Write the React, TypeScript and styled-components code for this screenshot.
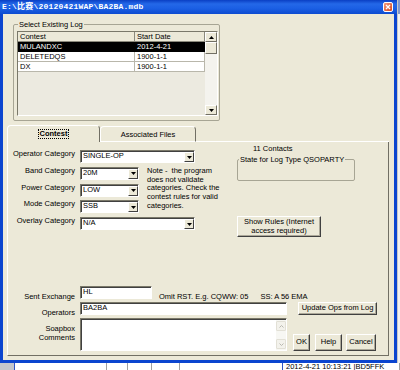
import React from "react";
import styled, { createGlobalStyle, css } from "styled-components";

const FACE = "#ece9d8";
const EDGE = "#a7a594";
const DARK = "#716f64";

const GlobalStyle = createGlobalStyle`
  html, body { margin: 0; padding: 0; background: #ffffff; }
  body { font-family: "Liberation Sans", Arial, sans-serif; font-size: 7.5px; color: #000; }
  #root { width: 400px; height: 370px; overflow: hidden; }
  * { box-sizing: border-box; }
`;

const Desktop = styled.div`
  width: 400px;
  height: 370px;
  overflow: hidden;
  display: grid;
  grid-template-columns: 397px 3px;
  grid-template-rows: 363px 7px;
`;

const Dialog = styled.div`
  display: flex;
  flex-direction: column;
  min-height: 0;
`;

const TitleBar = styled.div`
  height: 14px;
  flex: none;
  display: flex;
  align-items: center;
  justify-content: space-between;
  padding: 0 4px 0 2px;
  background: linear-gradient(180deg, #0a3fc4 0%, #2468e8 28%, #1b5fe4 60%, #0d4bd0 100%);
`;

const TitleText = styled.span`
  color: #fff;
  font-family: "Liberation Mono", "Noto Sans CJK SC", monospace;
  font-weight: 700;
  font-size: 8px;
  letter-spacing: 0.2px;
  line-height: 10px;
  white-space: pre;
`;

const CloseButton = styled.div`
  width: 10px;
  height: 10px;
  border: 1px solid #fff;
  border-radius: 2px;
  background: linear-gradient(135deg, #f39a7c, #d6471f);
  display: grid;
  place-items: center;
`;

const Body = styled.div`
  flex: 1;
  min-height: 0;
  background: ${FACE};
  border: 3px solid #0b45cf;
  border-top: none;
  display: flex;
  flex-direction: column;
  padding: 6px 5px 4px 4px;
`;

const GroupBox = styled.fieldset<{ $w: number; $ml?: number; $mt?: number }>`
  margin: ${(p) => p.$mt ?? 0}px 0 0 ${(p) => p.$ml ?? 0}px;
  width: ${(p) => p.$w}px;
  min-width: 0;
  border: 1px solid ${EDGE};
  border-radius: 2px;
  flex: none;
`;

const LogGroup = styled(GroupBox)`
  padding: 2px 1px 4px 3px;
`;

const StateGroup = styled(GroupBox)`
  padding: 0;
`;

const Legend = styled.legend`
  padding: 0 1px;
  margin-left: 1px;
  line-height: 9px;
  font-size: 7.5px;
`;

const StateBody = styled.div`
  height: 16px;
`;

const LogList = styled.div`
  height: 85px;
  display: flex;
  border: 1px solid;
  border-color: #7a7869 #ffffff #ffffff #7a7869;
  background: #eceae0;
`;

const GridArea = styled.div`
  flex: 1;
  display: grid;
  grid-template-columns: 117px 70px;
  grid-auto-rows: 10px;
  align-content: start;
`;

const Cell = styled.div<{ $head?: boolean; $sel?: boolean }>`
  padding-left: 2px;
  line-height: 9px;
  white-space: nowrap;
  overflow: hidden;
  border-right: 1px solid;
  border-bottom: 1px solid;
  ${(p) =>
    p.$head
      ? css`
          background: ${FACE};
          border-color: #8b897c;
        `
      : p.$sel
      ? css`
          background: #000;
          color: #fff;
          border-color: #000;
        `
      : css`
          background: #fff;
          border-color: #b9b7ab;
        `}
`;

const VScroll = styled.div`
  width: 12px;
  flex: none;
  display: flex;
  flex-direction: column;
  background: #f4f3ee;
`;

const ScrollBtn = styled.div<{ $h: number }>`
  height: ${(p) => p.$h}px;
  flex: none;
  background: ${FACE};
  border: 1px solid;
  border-color: #ffffff ${DARK} ${DARK} #ffffff;
  display: grid;
  place-items: center;
`;

const ScrollTrack = styled.div`
  flex: 1;
`;

const TabStrip = styled.div`
  display: flex;
  align-items: flex-end;
  height: 17px;
  margin-top: 4px;
  flex: none;
`;

const Tab = styled.div<{ $active?: boolean; $w: number }>`
  width: ${(p) => p.$w}px;
  height: ${(p) => (p.$active ? 17 : 16)}px;
  background: ${FACE};
  border: 1px solid;
  border-color: #ffffff ${DARK} #ffffff #ffffff;
  border-bottom-width: ${(p) => (p.$active ? 0 : 1)}px;
  border-radius: 4px 4px 0 0;
  display: flex;
  align-items: center;
  justify-content: center;
  padding-bottom: ${(p) => (p.$active ? 1 : 0)}px;
  font-weight: ${(p) => (p.$active ? 700 : 400)};
`;

const FocusLabel = styled.span`
  border: 1px dotted #000;
  padding: 0 1px;
  line-height: 8px;
`;

const TabFill = styled.div`
  flex: 1;
  height: 1px;
  background: #fff;
`;

const Panel = styled.div`
  flex: 1;
  min-height: 0;
  border: 1px solid;
  border-top: none;
  border-color: #ffffff ${DARK} ${DARK} #ffffff;
  display: flex;
  flex-direction: column;
  padding: 0 0 4px 0;
`;

const TopSection = styled.div`
  display: flex;
  align-items: flex-start;
`;

const CategoryForm = styled.div`
  margin-top: 8px;
  display: grid;
  grid-template-columns: 67px 59px 85px;
  column-gap: 5px;
  grid-template-rows: repeat(5, 13px);
  row-gap: 3.75px;
`;

const Label = styled.div<{ $pt?: number; $row?: number }>`
  grid-column: 1;
  ${(p) => (p.$row ? `grid-row: ${p.$row};` : "")}
  text-align: right;
  white-space: nowrap;
  line-height: ${(p) => (p.$pt !== undefined ? 9 : 7)}px;
  padding-top: ${(p) => p.$pt ?? 0}px;
`;

const ComboBox = styled.div<{ $w: number; $span?: boolean; $row: number }>`
  width: ${(p) => p.$w}px;
  height: 13px;
  grid-column: ${(p) => (p.$span ? "2 / 4" : "2")};
  grid-row: ${(p) => p.$row};
  border: 1px solid;
  border-color: #7a7869 #ffffff #ffffff #7a7869;
  box-shadow: inset 1px 1px 0 #404040;
  background: #fff;
  display: flex;
  align-items: stretch;
`;

const FieldText = styled.span`
  flex: 1;
  padding-left: 2px;
  line-height: 10px;
  white-space: nowrap;
`;

const ComboArrow = styled.div`
  width: 10px;
  margin: 1px 0 0 0;
  background: ${FACE};
  border: 1px solid;
  border-color: #ffffff #404040 #404040 #ffffff;
  display: grid;
  place-items: center;
`;

const Note = styled.div`
  grid-column: 3;
  grid-row: 2 / 5;
  padding-left: 3px;
  line-height: 8.75px;
  white-space: pre;
`;

const RightCol = styled.div`
  margin-left: 8px;
  margin-top: 2px;
  width: 118px;
  display: flex;
  flex-direction: column;
  align-items: flex-start;
`;

const Contacts = styled.div`
  margin-left: 16px;
  line-height: 9px;
`;

const Button = styled.button<{ $w: number; $h: number; $ml?: number; $mt?: number }>`
  width: ${(p) => p.$w}px;
  height: ${(p) => p.$h}px;
  margin: ${(p) => p.$mt ?? 0}px 0 0 ${(p) => p.$ml ?? 0}px;
  padding: 0;
  flex: none;
  font-family: "Liberation Sans", Arial, sans-serif;
  font-size: 7.5px;
  line-height: 8.7px;
  color: #000;
  background: ${FACE};
  border: 1px solid;
  border-color: #ffffff #404040 #404040 #ffffff;
  box-shadow: inset -1px -1px 0 #aca899;
  text-align: center;
`;

const BottomGrid = styled.div`
  margin-top: auto;
  display: grid;
  grid-template-columns: 67px 207px 1fr;
  column-gap: 5px;
  grid-template-rows: 13px 13px 33px;
  row-gap: 3px;
`;

const FieldRow = styled.div`
  display: flex;
  align-items: flex-start;
`;

const TextField = styled.div<{ $w: number }>`
  width: ${(p) => p.$w}px;
  height: 13px;
  flex: none;
  border: 1px solid;
  border-color: #7a7869 #ffffff #ffffff #7a7869;
  box-shadow: inset 1px 1px 0 #404040;
  background: #fff;
  display: flex;
`;

const Hint = styled.div`
  margin-left: 7px;
  padding-top: 6px;
  line-height: 9px;
  display: flex;
  gap: 12px;
  white-space: nowrap;
`;

const MemoBox = styled.div`
  height: 33px;
  border: 1px solid;
  border-color: #7a7869 #ffffff #ffffff #7a7869;
  box-shadow: inset 1px 1px 0 #404040;
  background: #fff;
  display: flex;
  justify-content: flex-end;
  padding: 1px 0 0 1px;
`;

const MemoScroll = styled.div`
  width: 10px;
  display: flex;
  flex-direction: column;
  justify-content: space-between;
  background: #f7f7f3;
  padding: 1px 0;
`;

const MemoBtn = styled.div`
  height: 10px;
  background: #f3f2ec;
  border: 1px solid #e2e0d6;
  border-radius: 1px;
  display: grid;
  place-items: center;
`;

const ButtonRow = styled.div`
  display: flex;
  align-items: flex-end;
  padding-left: 1px;
`;

const RightStrip = styled.div`
  background: linear-gradient(180deg, #8198cc 0 14px, #f2f2f0 14px);
  border-left: 1px solid #c8c8c8;
`;

const BottomStrip = styled.div`
  grid-column: 1 / 3;
  display: flex;
  background: #fff;
  overflow: hidden;
`;

const BgCell = styled.div<{ $w?: number; $bg?: string; $line?: string }>`
  ${(p) => (p.$w ? `width: ${p.$w}px; flex: none;` : "flex: 1;")}
  background: ${(p) => p.$bg ?? "#ffffff"};
  border-right: 1px solid ${(p) => p.$line ?? "#a0a0a0"};
  padding-left: 3px;
  line-height: 9px;
  margin-top: -1px;
  white-space: nowrap;
`;

const Tri = ({ up, color = "#000" }: { up?: boolean; color?: string }) => (
  <svg width="5" height="3" viewBox="0 0 5 3">
    <path d={up ? "M0 3h5L2.5 0z" : "M0 0h5L2.5 3z"} fill={color} />
  </svg>
);

const Chevron = ({ up }: { up?: boolean }) => (
  <svg width="5" height="3" viewBox="0 0 5 3">
    <path d={up ? "M0.5 2.5L2.5 0.5L4.5 2.5" : "M0.5 0.5L2.5 2.5L4.5 0.5"} fill="none" stroke="#b9b8b0" strokeWidth="1" />
  </svg>
);

const Combo = ({ value, w, span, row }: { value: string; w: number; span?: boolean; row: number }) => (
  <ComboBox $w={w} $span={span} $row={row}>
    <FieldText>{value}</FieldText>
    <ComboArrow>
      <Tri />
    </ComboArrow>
  </ComboBox>
);

const logs = [
  { contest: "MULANDXC", date: "2012-4-21", sel: true },
  { contest: "DELETEDQS", date: "1900-1-1" },
  { contest: "DX", date: "1900-1-1" },
];

export default function App() {
  return (
    <>
      <GlobalStyle />
      <Desktop>
        <Dialog>
          <TitleBar>
            <TitleText>E:\比赛\20120421WAP\BA2BA.mdb</TitleText>
            <CloseButton>
              <svg width="6" height="6" viewBox="0 0 6 6">
                <path d="M1 1L5 5M5 1L1 5" stroke="#fff" strokeWidth="1.3" />
              </svg>
            </CloseButton>
          </TitleBar>
          <Body>
            <LogGroup $w={207} $ml={6}>
              <Legend>Select Existing Log</Legend>
              <LogList>
                <GridArea>
                  <Cell $head>Contest</Cell>
                  <Cell $head>Start Date</Cell>
                  {logs.map((l) => (
                    <React.Fragment key={l.contest}>
                      <Cell $sel={l.sel}>{l.contest}</Cell>
                      <Cell $sel={l.sel}>{l.date}</Cell>
                    </React.Fragment>
                  ))}
                </GridArea>
                <VScroll>
                  <ScrollBtn $h={10}>
                    <Tri up />
                  </ScrollBtn>
                  <ScrollBtn $h={12} />
                  <ScrollTrack />
                  <ScrollBtn $h={10}>
                    <Tri />
                  </ScrollBtn>
                </VScroll>
              </LogList>
            </LogGroup>

            <TabStrip>
              <Tab $active $w={93}>
                <FocusLabel>Contest</FocusLabel>
              </Tab>
              <Tab $w={96}>Associated Files</Tab>
              <TabFill />
            </TabStrip>

            <Panel>
              <TopSection>
                <CategoryForm>
                  <Label $row={1}>Operator Category</Label>
                  <Combo value="SINGLE-OP" w={115} span row={1} />
                  <Label $row={2}>Band Category</Label>
                  <Combo value="20M" w={59} row={2} />
                  <Note>
                    {"Note -  the program"}
                    <br />
                    {"does not validate"}
                    <br />
                    {"categories. Check the"}
                    <br />
                    {"contest rules for valid"}
                    <br />
                    {"categories."}
                  </Note>
                  <Label $row={3}>Power Category</Label>
                  <Combo value="LOW" w={59} row={3} />
                  <Label $row={4}>Mode Category</Label>
                  <Combo value="SSB" w={59} row={4} />
                  <Label $row={5}>Overlay Category</Label>
                  <Combo value="N/A" w={115} span row={5} />
                </CategoryForm>
                <RightCol>
                  <Contacts>11 Contacts</Contacts>
                  <StateGroup $w={118} $mt={2}>
                    <Legend>State for Log Type QSOPARTY</Legend>
                    <StateBody />
                  </StateGroup>
                  <Button $w={84} $h={21} $mt={35}>
                    Show Rules (Internet
                    <br />
                    access required)
                  </Button>
                </RightCol>
              </TopSection>

              <BottomGrid>
                <Label $pt={6}>Sent Exchange</Label>
                <FieldRow>
                  <TextField $w={72}>
                    <FieldText>HL</FieldText>
                  </TextField>
                  <Hint>
                    <span>Omit RST. E.g. CQWW: 05</span>
                    <span>SS: A 56 EMA</span>
                  </Hint>
                </FieldRow>
                <div />

                <Label $pt={5.5}>Operators</Label>
                <TextField $w={207}>
                  <FieldText>BA2BA</FieldText>
                </TextField>
                <FieldRow>
                  <Button $w={79} $h={13} $ml={6}>
                    Update Ops from Log
                  </Button>
                </FieldRow>

                <Label $pt={5.5}>
                  Soapbox
                  <br />
                  Comments
                </Label>
                <MemoBox>
                  <MemoScroll>
                    <MemoBtn>
                      <Chevron up />
                    </MemoBtn>
                    <MemoBtn>
                      <Chevron />
                    </MemoBtn>
                  </MemoScroll>
                </MemoBox>
                <ButtonRow>
                  <Button $w={17} $h={17}>
                    OK
                  </Button>
                  <Button $w={27} $h={17} $ml={5}>
                    Help
                  </Button>
                  <Button $w={30} $h={17} $ml={4}>
                    Cancel
                  </Button>
                </ButtonRow>
              </BottomGrid>
            </Panel>
          </Body>
        </Dialog>
        <RightStrip />
        <BottomStrip>
          <BgCell $w={15} $bg="#c3c6cc" $line="#2f55c4" />
          <BgCell $w={92} />
          <BgCell $w={21} />
          <BgCell $w={24} />
          <BgCell $w={28} />
          <BgCell $w={103} $line="#2f55c4" />
          <BgCell>2012-4-21 10:13:21 |BD5FFK</BgCell>
        </BottomStrip>
      </Desktop>
    </>
  );
}
